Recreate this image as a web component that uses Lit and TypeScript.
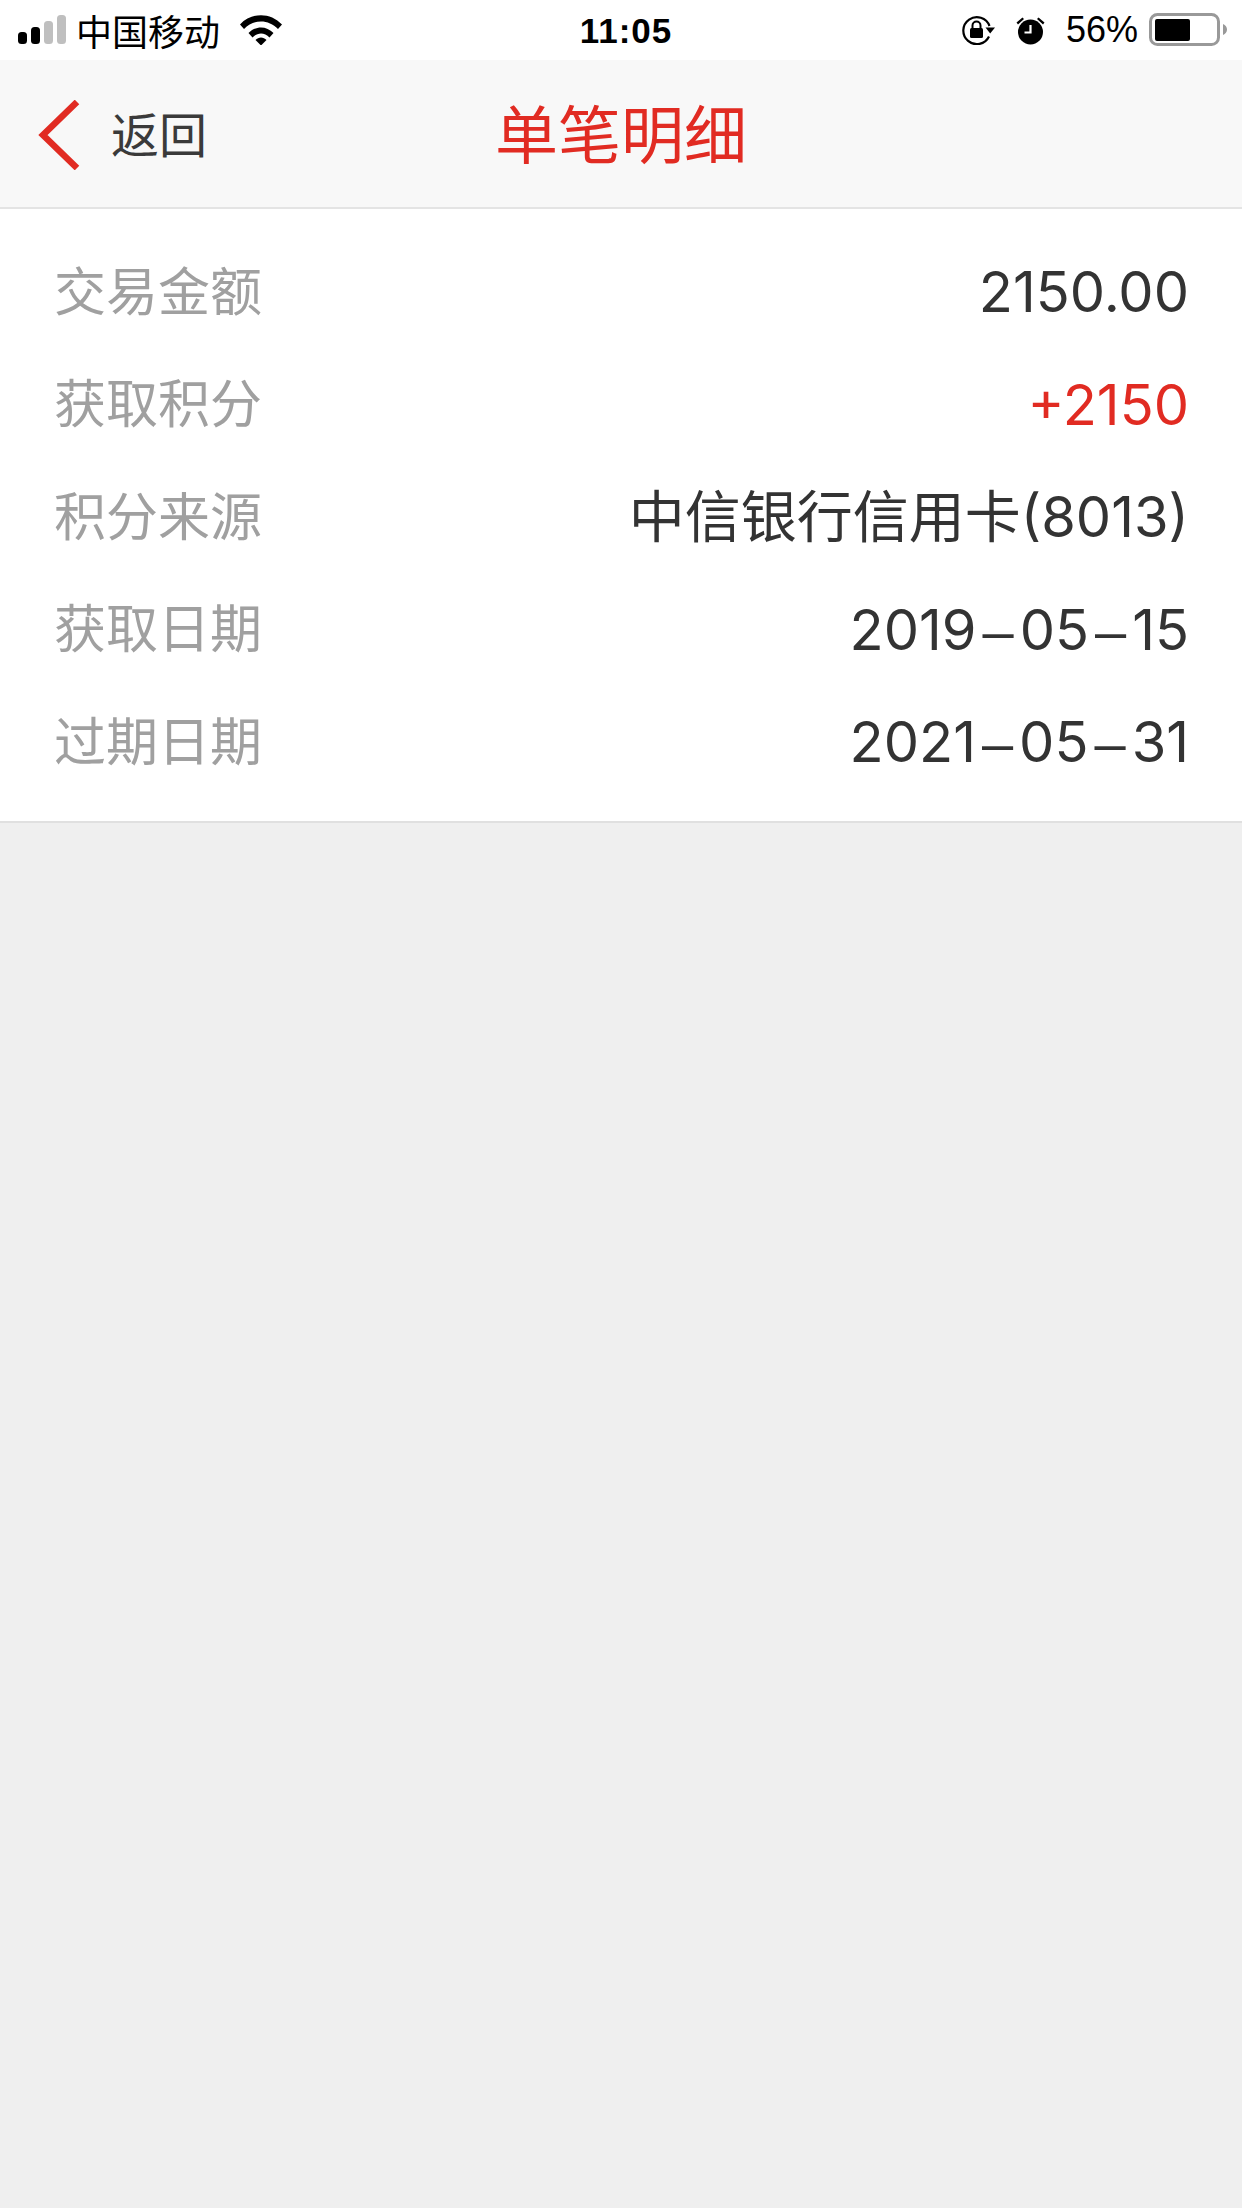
import { LitElement, css, html } from 'lit';
import { customElement } from 'lit/decorators.js';

const rows = [
  { label: '交易金额', value: '2150.00' },
  { label: '获取积分', value: '+2150', accent: true },
  { label: '积分来源', value: '中信银行信用卡(8013)' },
  { label: '获取日期', value: '2019-05-15' },
  { label: '过期日期', value: '2021-05-31' },
];

// the dates use a long thin dash, wider than the hyphen of the font
const renderValue = (value: string) =>
  value.includes('-')
    ? value.split('-').map((part, i) => (i ? html`<span class="dash">–</span>${part}` : part))
    : value;

@customElement('app-root')
export class AppRoot extends LitElement {
  static styles = css`
    :host {
      display: block;
      width: 1242px;
      height: 2208px;
      background: #efefef;
      font-family: 'Liberation Sans', 'Noto Sans CJK SC', sans-serif;
      overflow: hidden;
    }
    .status {
      height: 60px;
      background: #fff;
      display: grid;
      grid-template-columns: 1fr auto 1fr;
      align-items: center;
      color: #000;
    }
    .status-left {
      display: flex;
      align-items: center;
      padding-left: 18px;
    }
    .carrier {
      font-size: 36px;
      line-height: 60px;
      margin-left: 10px;
      font-family: 'Noto Sans CJK SC', sans-serif;
      font-weight: 400;
    }
    .wifi {
      margin-left: 20px;
    }
    .time {
      font-size: 35px;
      font-weight: 700;
      letter-spacing: 1px;
      padding-top: 2px;
      font-family: 'Liberation Sans', sans-serif;
      margin-left: 10px;
    }
    .status-right {
      display: flex;
      align-items: center;
      justify-content: flex-end;
      padding-right: 15px;
    }
    .pct {
      font-size: 36px;
      margin: 0 11px 0 21px;
    }
    .alarm {
      margin-left: 21px;
    }
    .nav {
      height: 147px;
      background: #f8f8f8;
      border-bottom: 2px solid #e4e4e4;
      display: grid;
      grid-template-columns: 1fr auto 1fr;
      align-items: center;
    }
    .back {
      display: flex;
      align-items: center;
      padding-left: 37px;
      color: #3a3a3a;
      font-family: 'Noto Sans CJK SC', sans-serif;
      font-weight: 400;
      font-size: 48px;
      line-height: 60px;
    }
    .back svg {
      margin-top: 2px;
    }
    .back span {
      margin-left: 30px;
      padding-bottom: 3px;
    }
    .title {
      color: #e12b22;
      font-size: 63px;
      line-height: 70px;
      padding-bottom: 5px;
      font-family: 'Noto Sans CJK SC', sans-serif;
      font-weight: 400;
    }
    .list {
      background: #fff;
      border-bottom: 2px solid #e0e0e0;
      padding: 27px 54px 22px;
    }
    .row {
      height: 112.5px;
      display: flex;
      align-items: center;
      justify-content: space-between;
    }
    .label {
      color: #a0a0a0;
      font-size: 52px;
      line-height: 60px;
      padding-bottom: 7px;
      font-family: 'Noto Sans CJK SC', sans-serif;
      font-weight: 400;
    }
    .value {
      color: #333;
      font-size: 56px;
      line-height: 60px;
      margin-right: -1px;
      font-family: 'Inter', 'Noto Sans CJK SC', sans-serif;
      font-weight: 400;
      display: block;
      height: 60px;
    }
    .value.accent {
      color: #e12b22;
    }
    .dash {
      font-family: 'Liberation Sans', sans-serif;
      margin: 0 6px;
    }
  `;

  render() {
    return html`
      <div class="status">
        <div class="status-left">
          <svg width="48" height="30" viewBox="0 0 48 30">
            <rect x="0" y="17" width="9" height="12" rx="3.5" fill="#000" />
            <rect x="13" y="12" width="9" height="17" rx="3.5" fill="#000" />
            <rect x="26" y="6" width="9" height="23" rx="3.5" fill="#bfbfbf" />
            <rect x="39" y="0" width="9" height="29" rx="3.5" fill="#bfbfbf" />
          </svg>
          <span class="carrier">中国移动</span>
          <svg class="wifi" width="42" height="30" viewBox="0 0 42 30">
            <path d="M0 9.500C11.500-3 30.500-3 42 9.500L38 14C28.500 4 13.500 4 4 14Z" fill="#000" />
            <path d="M8.500 18C15.500 10.500 26.500 10.500 33.500 18L29.500 22.500C24.500 17 17.500 17 12.500 22.500Z" fill="#000" />
            <path d="M15.500 25C18.500 21.500 23.500 21.500 26.500 25L21 30.500Z" fill="#000" />
          </svg>
        </div>
        <div class="time">11:05</div>
        <div class="status-right">
          <svg width="33" height="30" viewBox="0 0 33 30">
            <path d="M27 21.500A13.500 13.500 0 1 1 27.500 11" fill="none" stroke="#000" stroke-width="2.200" />
            <path d="M23.500 12.500H33L28.200 18.500Z" fill="#000" />
            <rect x="8" y="13" width="13" height="10" rx="1.500" fill="#000" />
            <path d="M10.500 13.500V10.500A4 4 0 0 1 18.500 10.500V13.500" fill="none" stroke="#000" stroke-width="2" />
          </svg>
          <svg class="alarm" width="29" height="29" viewBox="0 0 29 29">
            <circle cx="14.500" cy="16" r="12.500" fill="#000" />
            <path d="M0.500 6.500L6.500 1.500L8 3L2 8.500Z M28.500 6.500L22.500 1.500L21 3L27 8.500Z" fill="#000" />
            <path d="M14.500 9V16.500H8.500" fill="none" stroke="#fff" stroke-width="2.200" />
          </svg>
          <span class="pct">56%</span>
          <svg width="78" height="34" viewBox="0 0 78 34">
            <rect x="1.500" y="1.500" width="68" height="30" rx="7" fill="none" stroke="#999" stroke-width="3" />
            <rect x="6" y="6" width="35" height="22" rx="2" fill="#000" />
            <path d="M74 11C76.500 12 78 14 78 16.500C78 19 76.500 21 74 22Z" fill="#999" />
          </svg>
        </div>
      </div>
      <div class="nav">
        <div class="back">
          <svg width="44" height="70" viewBox="0 0 44 70">
            <path d="M40 2L6 35L40 68" fill="none" stroke="#e12b22" stroke-width="6.500" />
          </svg>
          <span>返回</span>
        </div>
        <div class="title">单笔明细</div>
        <div></div>
      </div>
      <div class="list">
        ${rows.map(
          (r) => html`
            <div class="row">
              <span class="label">${r.label}</span>
              <span class="value ${r.accent ? 'accent' : ''}">${renderValue(r.value)}</span>
            </div>
          `
        )}
      </div>
    `;
  }
}
